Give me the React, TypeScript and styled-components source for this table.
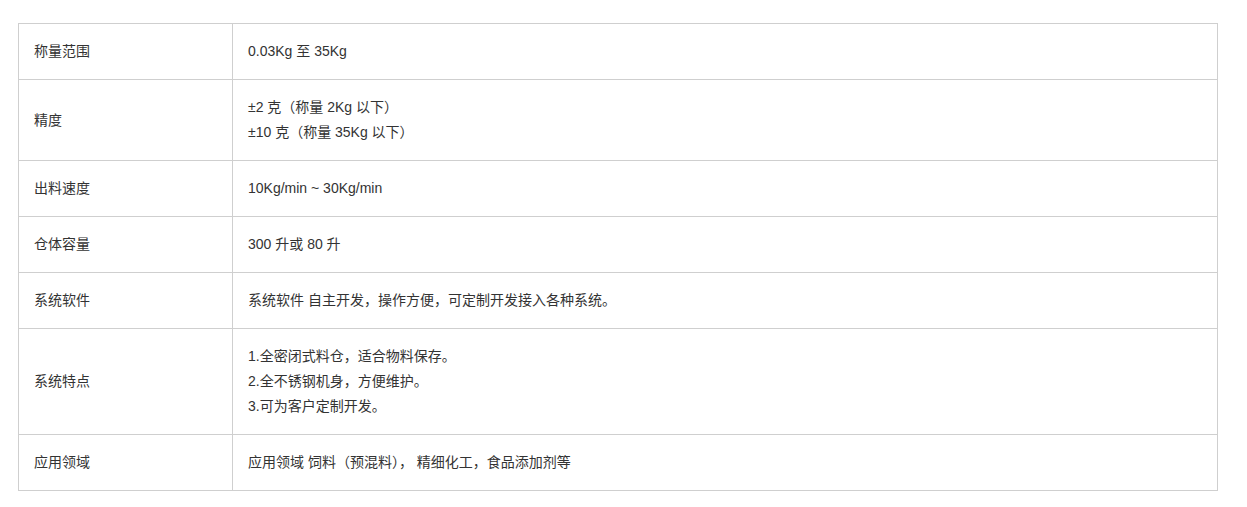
import React from "react";
import styled, { createGlobalStyle } from "styled-components";

const Global = createGlobalStyle`
  html, body { margin: 0; padding: 0; background: #fff; }
  body {
    font-family: "Liberation Sans", Arial, "Noto Sans CJK SC", sans-serif;
    color: #333;
  }
`;

const Page = styled.div`
  padding: 23px 0 0 18px;
`;

const SpecTable = styled.div`
  width: 1200px;
  box-sizing: border-box;
  border-top: 1px solid #cfcfcf;
  border-left: 1px solid #cfcfcf;
  display: flex;
  flex-direction: column;
`;

const Row = styled.div`
  display: grid;
  grid-template-columns: 214px 985px;
`;

const Cell = styled.div`
  box-sizing: border-box;
  border-right: 1px solid #cfcfcf;
  border-bottom: 1px solid #cfcfcf;
  padding: 15px 15px;
  font-size: 14px;
  line-height: 25px;
  color: #333;
`;

const Label = styled(Cell)`
  display: flex;
  align-items: center;
`;

const Value = styled(Cell)`
  display: flex;
  flex-direction: column;
  justify-content: center;
`;

const Line = styled.div`
  white-space: pre;
`;

const rows: { label: string; lines: string[] }[] = [
  { label: "称量范围", lines: ["0.03Kg 至 35Kg"] },
  { label: "精度", lines: ["±2 克（称量 2Kg 以下）", "±10 克（称量 35Kg 以下）"] },
  { label: "出料速度", lines: ["10Kg/min ~ 30Kg/min"] },
  { label: "仓体容量", lines: ["300 升或 80 升"] },
  { label: "系统软件", lines: ["系统软件 自主开发，操作方便，可定制开发接入各种系统。"] },
  {
    label: "系统特点",
    lines: ["1.全密闭式料仓，适合物料保存。", "2.全不锈钢机身，方便维护。", "3.可为客户定制开发。"],
  },
  { label: "应用领域", lines: ["应用领域 饲料（预混料）， 精细化工，食品添加剂等"] },
];

export default function App() {
  return (
    <Page>
      <Global />
      <SpecTable>
        {rows.map((r) => (
          <Row key={r.label}>
            <Label>{r.label}</Label>
            <Value>
              {r.lines.map((l) => (
                <Line key={l}>{l}</Line>
              ))}
            </Value>
          </Row>
        ))}
      </SpecTable>
    </Page>
  );
}
